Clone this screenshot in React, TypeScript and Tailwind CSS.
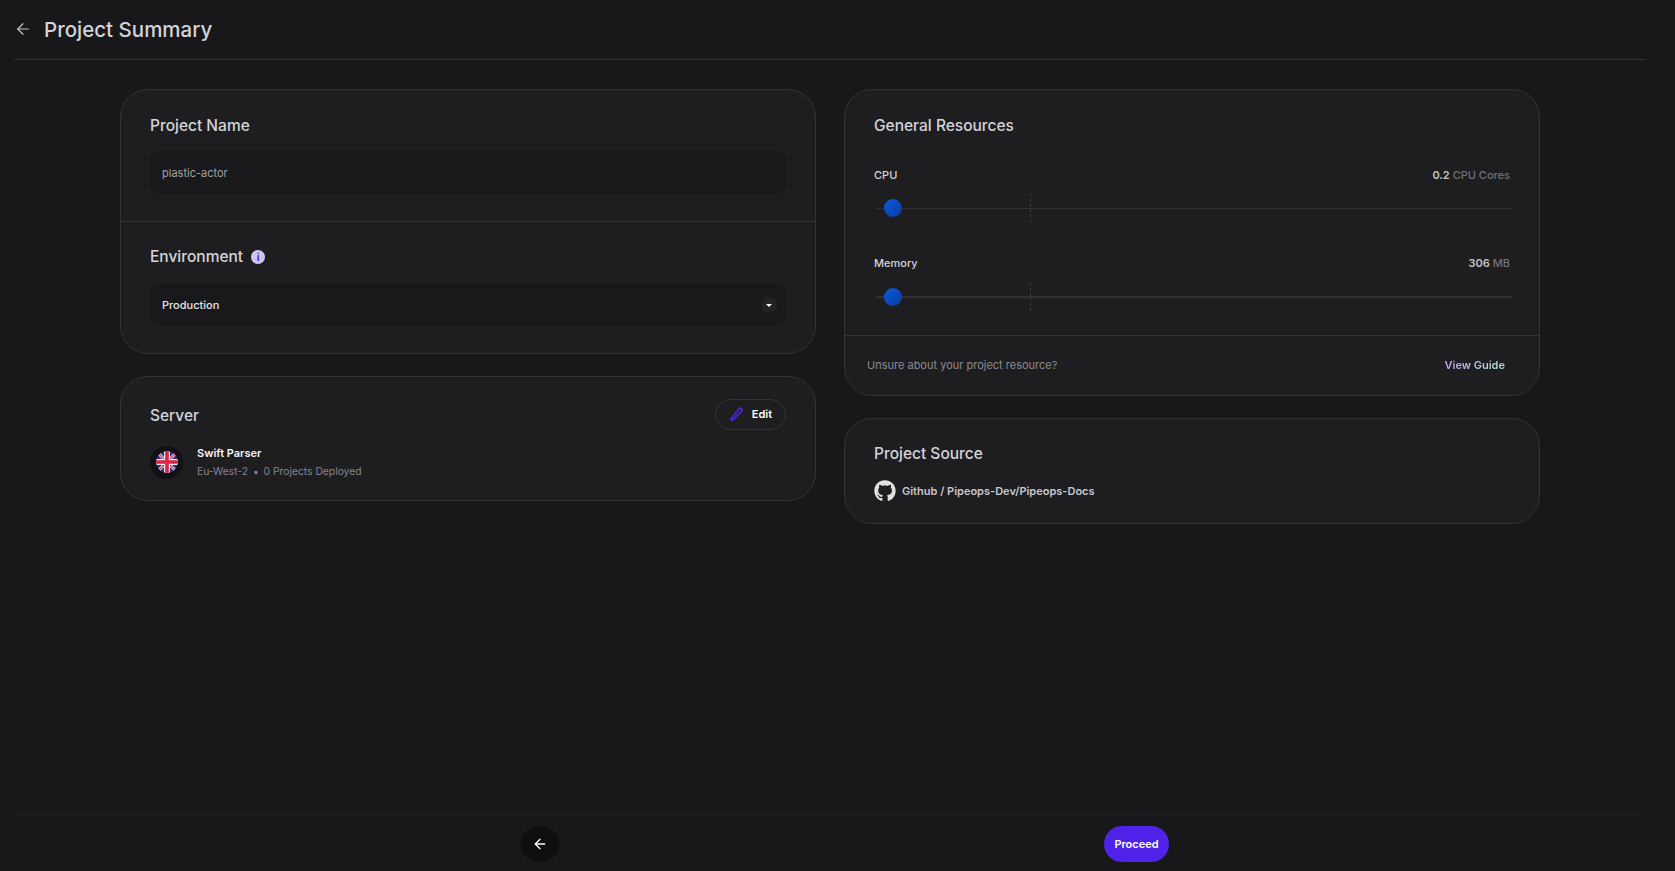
import { ArrowLeft } from "lucide-react"
import { FaGithub } from "react-icons/fa"

function UkFlag() {
  return (
    <svg viewBox="0 0 22 22" className="h-[22px] w-[22px] rounded-full">
      <defs>
        <clipPath id="uk-clip">
          <circle cx="11" cy="11" r="11" />
        </clipPath>
      </defs>
      <g clipPath="url(#uk-clip)">
        <rect width="22" height="22" fill="#26357f" />
        <path d="M0 0 22 22M22 0 0 22" stroke="#e6e0e6" strokeWidth="3" />
        <path d="M0 0 22 22M22 0 0 22" stroke="#d8244a" strokeWidth="1.2" />
        <path d="M11 0v22M0 11h22" stroke="#e6e0e6" strokeWidth="6" />
        <path d="M11 0v22M0 11h22" stroke="#d8244a" strokeWidth="3.6" />
      </g>
    </svg>
  )
}

function ResourceSlider({ label, value, unit, thick }: { label: string; value: string; unit: string; thick?: boolean }) {
  return (
    <div>
      <div className="flex items-center justify-between pl-[29px] pr-[29px] text-[11px] font-medium leading-[16px]">
        <span className="text-[#d4d4d8]">{label}</span>
        <span className="text-[#71717a]">
          <span className="font-semibold text-[#c4c4c8]">{value}</span> {unit}
        </span>
      </div>
      <div className={`relative ml-[31px] mr-[27px] flex h-[28px] items-center ${thick ? "mt-[12px]" : "mt-[11px]"}`}>
        <div className={`w-full bg-[#313134] ${thick ? "h-[2px]" : "h-px"}`} />
        <div className="absolute left-[154px] top-0 h-[28px] border-l border-dashed border-[#3a3a3e]" />
        <div className="absolute left-[8px] top-[5px] h-[18px] w-[18px] rounded-full bg-gradient-to-br from-[#0a5ce0] to-[#0a3a9c]" />
      </div>
    </div>
  )
}

export default function App() {
  return (
    <div className="flex h-screen w-full flex-col overflow-hidden bg-[#18181b] font-['Inter',sans-serif] text-[#d4d4d8]">
      <header className="ml-[14px] mr-[30px] flex h-[60px] shrink-0 items-center gap-[12px] border-b border-[#333336]">
        <ArrowLeft size={18} strokeWidth={1.5} className="-mt-[1px] text-[#c8c8cc]" />
        <h1 className="mt-[1px] text-[20.5px] font-medium text-[#d4d4d8]">Project Summary</h1>
      </header>

      <main className="grid flex-1 grid-cols-2 items-start gap-x-[28px] pl-[120px] pr-[135px] pt-[29px]">
        <div className="flex flex-col gap-[22px]">
          <section className="rounded-[28px] border border-[#343437] bg-[#1e1e21]">
            <div className="border-b border-[#343437] px-[29px] pb-[27px] pt-[24px]">
              <h2 className="text-[15.5px] font-medium leading-[24px]">Project Name</h2>
              <div className="mt-[13px] flex h-[43px] items-center rounded-[10px] bg-[#19191b] px-[12px] pt-[1px] text-[11px] text-[#a1a1aa]">
                plastic-actor
              </div>
            </div>
            <div className="px-[29px] pb-[27px] pt-[23px]">
              <div className="flex items-center gap-[8px]">
                <h2 className="text-[15.5px] font-medium leading-[24px]">Environment</h2>
                <span className="flex h-[14px] w-[14px] items-center justify-center rounded-full bg-[#cdc6f2] text-[10px] font-bold leading-none text-[#4f22e8]">
                  i
                </span>
              </div>
              <div className="mt-[14px] flex h-[43px] items-center justify-between rounded-[10px] bg-[#19191b] pl-[12px] pr-[9px] pt-[1px] text-[11px] font-medium text-[#e4e4e7]">
                Production
                <span className="flex h-[16px] w-[16px] items-center justify-center rounded-full bg-[#222225]">
                  <span className="h-0 w-0 border-x-[3px] border-t-[3px] border-x-transparent border-t-white" />
                </span>
              </div>
            </div>
          </section>

          <section className="rounded-[28px] border border-[#343437] bg-[#1e1e21] pb-[21px] pl-[29px] pr-[29px] pt-[22px]">
            <div className="flex items-center justify-between">
              <h2 className="mt-[3px] text-[15.5px] font-medium leading-[24px]">Server</h2>
              <button className="flex h-[31px] w-[71px] items-center justify-center gap-[8px] rounded-full border border-[#343437] text-[11px] font-semibold text-white">
                <svg viewBox="0 0 16 16" className="h-[15px] w-[15px]" fill="none" stroke="#4f22e8" strokeWidth="1.8">
                  <path d="M10.6 1.9a1.9 1.9 0 0 1 2.7 2.7L6.1 11.8 3 14.2l-.9-.9 2.3-3.2z" strokeLinejoin="round" />
                </svg>
                Edit
              </button>
            </div>
            <div className="mt-[15px] flex items-center gap-[14px]">
              <div className="flex h-[33px] w-[33px] items-center justify-center rounded-full bg-[#111113]">
                <UkFlag />
              </div>
              <div>
                <p className="text-[11px] font-semibold leading-[16px] text-[#f4f4f5]">Swift Parser</p>
                <p className="mt-[2px] text-[10.3px] leading-[16px] text-[#85858c]">
                  Eu-West-2 <span className="mx-[2px]">•</span> 0 Projects Deployed
                </p>
              </div>
            </div>
          </section>
        </div>

        <div className="flex flex-col gap-[22px]">
          <section className="rounded-[28px] border border-[#343437] bg-[#1e1e21]">
            <div className="border-b border-[#343437] pb-[24px] pt-[24px]">
              <h2 className="pl-[29px] text-[15.5px] font-medium leading-[24px]">General Resources</h2>
              <div className="mt-[29px] flex flex-col gap-[33px]">
                <ResourceSlider label="CPU" value="0.2" unit="CPU Cores" />
                <ResourceSlider label="Memory" value="306" unit="MB" thick />
              </div>
            </div>
            <div className="flex h-[59px] items-center justify-between pl-[22px] pr-[34px]">
              <span className="text-[11px] text-[#8a8a90]">Unsure about your project resource?</span>
              <span className="bg-gradient-to-r from-[#c9a5f5] to-[#a5e8d8] bg-clip-text text-[11px] font-semibold text-transparent">
                View Guide
              </span>
            </div>
          </section>

          <section className="rounded-[28px] border border-[#343437] bg-[#1e1e21] pb-[21px] pl-[29px] pr-[29px] pt-[23px]">
            <h2 className="text-[15.5px] font-medium leading-[24px]">Project Source</h2>
            <div className="mt-[14px] flex items-center gap-[6px]">
              <FaGithub size={22} className="text-[#e0e0e0]" />
              <span className="text-[11px] font-semibold text-[#c8c8cc]">Github / Pipeops-Dev/Pipeops-Docs</span>
            </div>
          </section>
        </div>
      </main>

      <footer className="ml-[14px] mr-[30px] flex h-[57px] shrink-0 items-center border-t border-[#222225] pl-[507px] pt-[1px]">
        <div className="flex w-[648px] items-center justify-between">
          <button className="flex h-[36px] w-[38px] items-center justify-center rounded-full bg-[#0f0f10] text-white">
            <ArrowLeft size={16} strokeWidth={2} />
          </button>
          <button className="flex h-[36px] w-[65px] items-center justify-center rounded-full bg-[#4f22e8] pt-[1px] text-[11px] font-semibold text-white">
            Proceed
          </button>
        </div>
      </footer>
    </div>
  )
}
